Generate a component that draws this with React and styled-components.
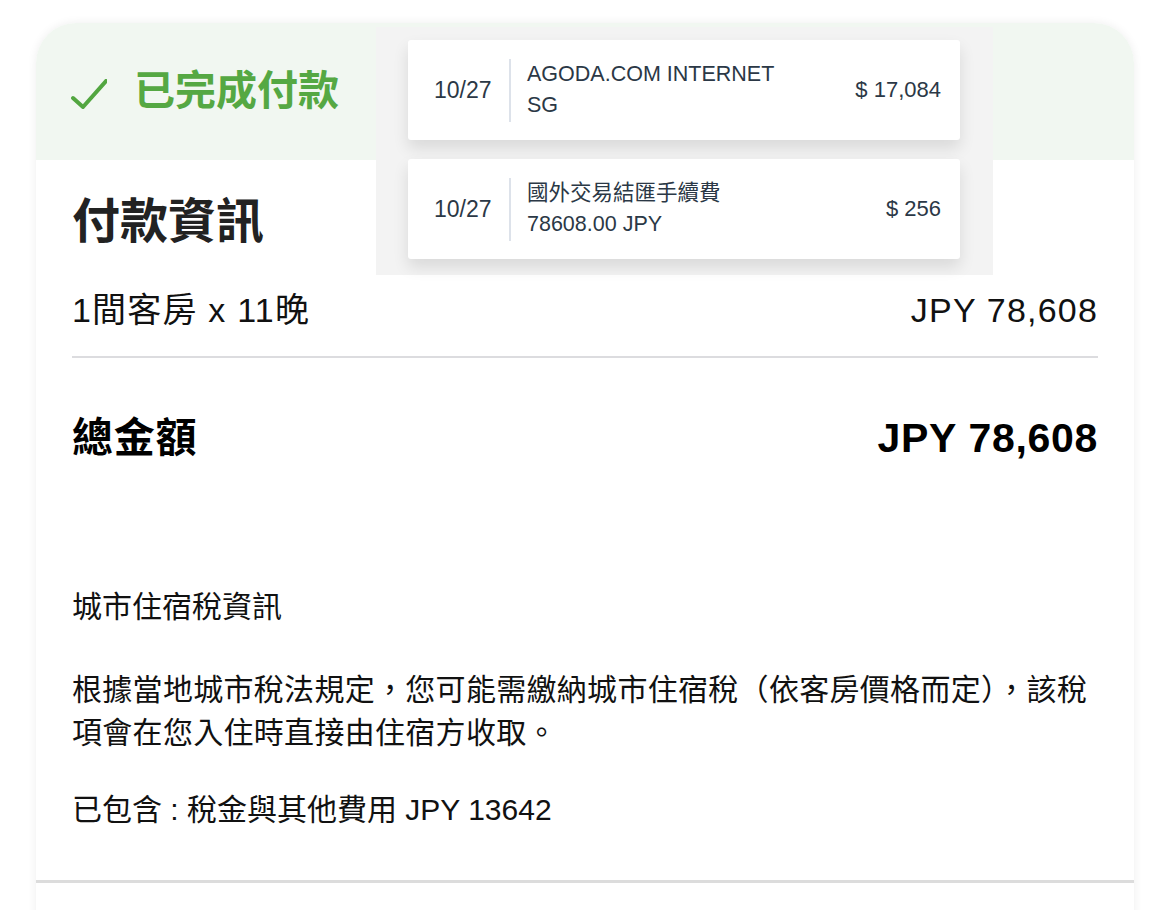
import styled, { createGlobalStyle } from "styled-components";

const GlobalStyle = createGlobalStyle`
  html, body {
    margin: 0;
    padding: 0;
    background: #ffffff;
  }
  body {
    font-family: "Liberation Sans", "Noto Sans CJK TC", sans-serif;
    color: #1d1d1f;
    overflow: hidden;
  }
`;

const transactions = [
  { date: "10/27", lines: ["AGODA.COM INTERNET", "SG"], amount: "$ 17,084" },
  { date: "10/27", lines: ["國外交易結匯手續費", "78608.00 JPY"], amount: "$ 256" },
];

const App = () => {
  return (
    <Page>
      <GlobalStyle />
      <Card>
        <StatusBar>
          <CheckIcon viewBox="0 0 36 30">
            <polyline points="2,19 12,28 35,2" />
          </CheckIcon>
          <Status>已完成付款</Status>
        </StatusBar>

        <Overlay>
          {transactions.map((item, idx) => (
            <TxCard key={idx}>
              <TxDate>{item.date}</TxDate>
              <TxDivider />
              <TxText>
                {item.lines.map((line, i) => (
                  <span key={i}>{line}</span>
                ))}
              </TxText>
              <TxAmount>{item.amount}</TxAmount>
            </TxCard>
          ))}
        </Overlay>

        <Body>
          <Heading>付款資訊</Heading>
          <Row>
            <span>1間客房 x 11晚</span>
            <span>JPY 78,608</span>
          </Row>
          <Line />
          <TotalRow>
            <span>總金額</span>
            <span>JPY 78,608</span>
          </TotalRow>
          <TaxTitle>城市住宿稅資訊</TaxTitle>
          <Paragraph>
            根據當地城市稅法規定，您可能需繳納城市住宿稅（依客房價格而定），該稅項會在您入住時直接由住宿方收取。
          </Paragraph>
          <Included>已包含 : 稅金與其他費用 JPY 13642</Included>
        </Body>
        <BottomLine />
        <Rest />
      </Card>
    </Page>
  );
};

export default App;

const Page = styled.div`
  width: 1170px;
  height: 910px;
  padding-top: 23px;
  box-sizing: border-box;
`;

const Card = styled.div`
  position: relative;
  margin-left: 36px;
  width: 1098px;
  background: #ffffff;
  border-radius: 40px 40px 0 0;
  box-shadow: 0 0 10px rgba(0, 0, 0, 0.07);
  overflow: hidden;
`;

const StatusBar = styled.div`
  height: 137px;
  background: #f1f7f1;
  display: flex;
  align-items: center;
  padding-left: 35px;
  gap: 27px;
`;

const CheckIcon = styled.svg`
  width: 36px;
  height: 30px;
  margin-top: 4px;
  fill: none;
  stroke: #52a640;
  stroke-width: 4;
  stroke-linecap: round;
  stroke-linejoin: round;
`;

const Status = styled.div`
  font-size: 41px;
  font-weight: 700;
  color: #55a843;
  line-height: 1;
`;

const Overlay = styled.div`
  position: absolute;
  left: 340px;
  top: 4px;
  width: 617px;
  height: 248px;
  box-sizing: border-box;
  background: #f3f3f3;
  padding: 13px 33px 0 32px;
  display: flex;
  flex-direction: column;
  gap: 19px;
`;

const TxCard = styled.div`
  height: 100px;
  background: #ffffff;
  border-radius: 3px;
  box-shadow: 0 8px 16px rgba(0, 0, 0, 0.11);
  display: flex;
  align-items: center;
  padding: 0 19px 0 26px;
  color: #2b3846;
`;

const TxDate = styled.div`
  font-size: 23px;
  width: 59px;
`;

const TxDivider = styled.div`
  width: 2px;
  height: 63px;
  background: #dde2ea;
  margin: 0 16px;
`;

const TxText = styled.div`
  flex: 1;
  display: flex;
  flex-direction: column;
  font-size: 21.5px;
  line-height: 31px;
`;

const TxAmount = styled.div`
  font-size: 22px;
`;

const Body = styled.div`
  padding: 32px 36px 0;
  display: flex;
  flex-direction: column;
`;

const Heading = styled.h2`
  margin: 0;
  font-size: 48px;
  font-weight: 700;
  line-height: 60px;
  color: #222222;
`;

const Row = styled.div`
  margin-top: 36px;
  display: flex;
  justify-content: space-between;
  align-items: center;
  font-size: 34px;
  letter-spacing: 1.2px;
  line-height: 44px;
  color: #111111;
`;

const Line = styled.div`
  margin-top: 24px;
  height: 2px;
  background: #dcdcdf;
`;

const TotalRow = styled.div`
  margin-top: 52px;
  display: flex;
  justify-content: space-between;
  align-items: center;
  font-size: 41px;
  font-weight: 700;
  letter-spacing: 0.7px;
  line-height: 56px;
  color: #000000;
`;

const TaxTitle = styled.div`
  margin-top: 119px;
  font-size: 30px;
  line-height: 43px;
  color: #111111;
`;

const Paragraph = styled.p`
  margin: 40px 0 0;
  font-size: 30px;
  letter-spacing: 0.3px;
  line-height: 43px;
  color: #111111;
`;

const Included = styled.div`
  margin-top: 34px;
  font-size: 30px;
  line-height: 43px;
  color: #111111;
`;

const BottomLine = styled.div`
  margin-top: 49px;
  height: 3px;
  background: #dcdcdc;
`;

const Rest = styled.div`
  height: 60px;
`;
